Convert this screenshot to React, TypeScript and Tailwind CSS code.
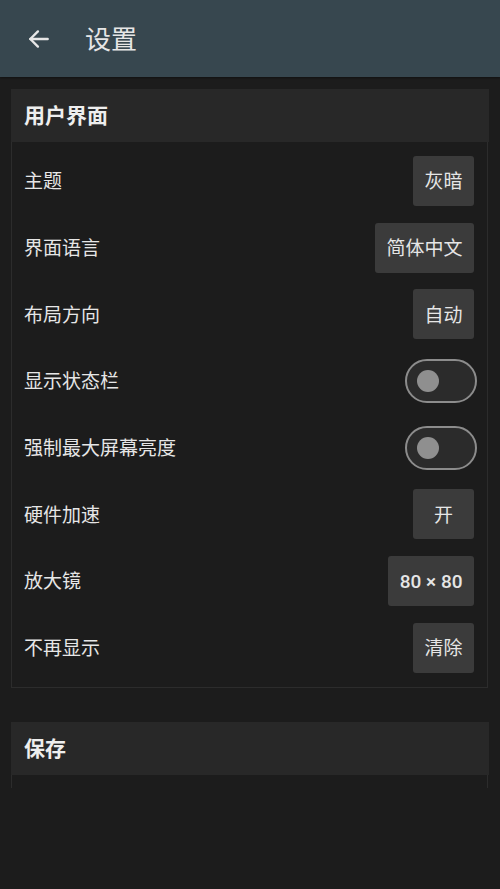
import React from "react";

const font = { fontFamily: '"Roboto", "Noto Sans CJK SC", sans-serif' };

function Btn({ children }: { children: React.ReactNode }) {
  return (
    <div className="h-[50px] min-w-[61px] px-[11.5px] pt-[3px] flex items-center justify-center rounded-[3px] bg-[#3b3b3b] text-[#e6e6e6] text-[19px]">
      {children}
    </div>
  );
}

function Toggle() {
  return (
    <div className="w-[72px] h-[44px] rounded-full border-2 border-[#8c8c8c] bg-[#2b2b2b] flex items-center pl-[10px] mr-[-3px]">
      <div className="w-[22px] h-[22px] rounded-full bg-[#8f8f8f]" />
    </div>
  );
}

const rows: { label: string; control: React.ReactNode }[] = [
  { label: "主题", control: <Btn>灰暗</Btn> },
  { label: "界面语言", control: <Btn>简体中文</Btn> },
  { label: "布局方向", control: <Btn>自动</Btn> },
  { label: "显示状态栏", control: <Toggle /> },
  { label: "强制最大屏幕亮度", control: <Toggle /> },
  { label: "硬件加速", control: <Btn>开</Btn> },
  { label: "放大镜", control: <Btn><span className="font-medium">80 × 80</span></Btn> },
  { label: "不再显示", control: <Btn>清除</Btn> },
];

export default function App() {
  return (
    <div className="w-[500px] h-[889px] bg-[#1c1c1c] overflow-hidden" style={font}>
      <div className="h-[77px] bg-[#37474f] flex items-center shadow-[0_1px_2px_rgba(0,0,0,0.4)]">
        <svg className="ml-[26px]" width="26" height="26" viewBox="0 0 24 24" fill="none" stroke="#e6e6e6" strokeWidth="2.2" strokeLinecap="round" strokeLinejoin="round">
          <path d="M20 12H4" />
          <path d="M11 5l-7 7 7 7" />
        </svg>
        <div className="ml-[33px] pt-[2px] text-[26px] text-[#e6e6e6] leading-none">设置</div>
      </div>

      <div className="px-[11px] pt-[12px]">
        <div>
          <div className="h-[53px] bg-[#282828] flex items-center px-[13px] pt-[3px] text-[21px] font-bold text-[#eeeeee]">
            用户界面
          </div>
          <div className="border border-t-0 border-[#2c2c2c] mr-[1px] pt-[14px] pb-[14px] pl-[12px] pr-[13px] flex flex-col gap-[16.7px]">
            {rows.map((r) => (
              <div key={r.label} className="h-[50px] flex items-center justify-between">
                <span className="pt-[3px] text-[19px] text-[#e6e6e6]">{r.label}</span>
                {r.control}
              </div>
            ))}
          </div>
        </div>

        <div className="mt-[34px]">
          <div className="h-[53px] bg-[#282828] flex items-center px-[13px] pt-[3px] text-[21px] font-bold text-[#eeeeee]">
            保存
          </div>
          <div className="h-[13px] border border-t-0 border-b-0 border-[#2c2c2c] mr-[1px]" />
        </div>
      </div>
    </div>
  );
}
